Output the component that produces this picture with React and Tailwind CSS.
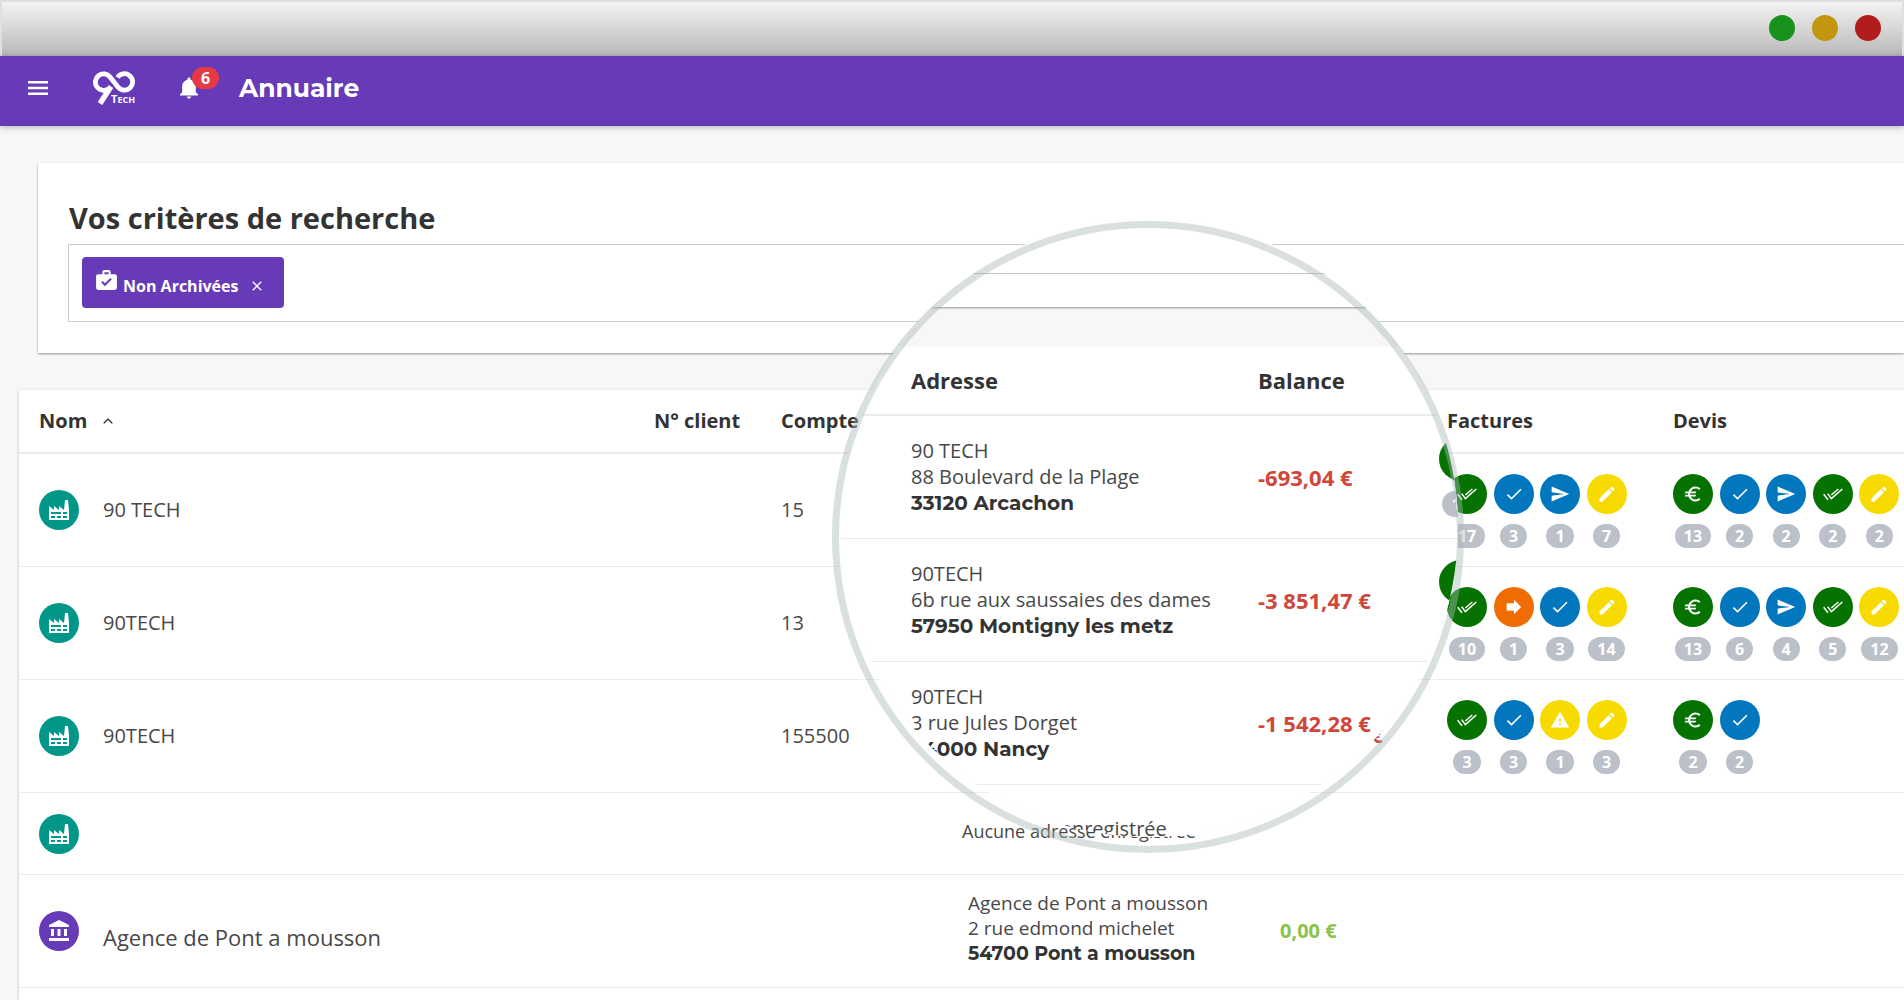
import { IoMdClose, IoIosArrowUp, IoMdNotifications } from "react-icons/io";
import { MdAccountBalance, MdCheck, MdEdit, MdEuro, MdSend, MdWarning } from "react-icons/md";
import { clsx } from "clsx";

const MenuIcon = () => (
  <svg viewBox="0 0 20 14" fill="currentColor" className="h-3.5 w-5">
    <path d="M0 0h20v2.6H0zM0 5.7h20v2.6H0zM0 11.4h20V14H0z" />
  </svg>
);

const FactoryIcon = ({ className }) => (
  <svg viewBox="0 0 24 24" fill="currentColor" className={className}>
    <path d="M4,18V20H8V18H4M4,14V16H14V14H4M10,18V20H14V18H10M16,14V16H20V14H16M16,18V20H20V18H16M2,22V8L7,12V8L12,12V8L17,12L18,2H21L22,12V22H2Z" />
  </svg>
);

const ArrowBoldIcon = ({ className }) => (
  <svg viewBox="1 1 22 22" fill="currentColor" className={className}>
    <path d="M4,16V8H12V4.16L19.84,12L12,19.84V16H4Z" />
  </svg>
);

const DoubleCheckIcon = ({ className }) => (
  <svg viewBox="0 0 60 60" fill="none" stroke="currentColor" strokeWidth="4.5" className={className}>
    <path d="M2 31 L15 47 M14 29 L25 44 L58 15 M25 33 L46 15" />
  </svg>
);

const BriefcaseCheckIcon = ({ className }) => (
  <svg viewBox="0 0 24 24" fill="currentColor" className={className}>
    <path d="M10,2H14A2,2 0 0,1 16,4V6H20A2,2 0 0,1 22,8V19A2,2 0 0,1 20,21H4C2.89,21 2,20.1 2,19V8C2,6.89 2.89,6 4,6H8V4C8,2.89 8.89,2 10,2M14,6V4H10V6H14M10.5,17.5L17.09,10.91L15.68,9.5L10.5,14.67L8.41,12.59L7,14L10.5,17.5Z" />
  </svg>
);

const Logo = () => (
  <svg viewBox="0 0 42 34" className="h-[34px] w-[42px]" aria-label="90 Tech">
    <g fill="none" stroke="#fff" strokeWidth="4.8">
      <path d="M15 18 A8.2 8.2 0 1 1 17 6 L25 16 A8.2 8.2 0 1 0 24.5 6.5" strokeLinejoin="round" />
      <path d="M18 15.5 L7 32.5" strokeWidth="5.4" />
    </g>
    <text x="18" y="32" fill="#fff" fontFamily="Open Sans, sans-serif" fontWeight="700" fontSize="11">
      T<tspan fontSize="9">ECH</tspan>
    </text>
  </svg>
);

const STATUTS = {
  paye: { icon: DoubleCheckIcon, color: "bg-[#067300]" },
  euro: { icon: MdEuro, color: "bg-[#067300]" },
  valide: { icon: MdCheck, color: "bg-[#0277bd]" },
  envoye: { icon: MdSend, color: "bg-[#0277bd]" },
  transfert: { icon: ArrowBoldIcon, color: "bg-[#ef6c00]" },
  alerte: { icon: MdWarning, color: "bg-[#f7da00]" },
  brouillon: { icon: MdEdit, color: "bg-[#f7da00]" },
};

const clients = [
  {
    id: 1,
    nom: "90 TECH",
    compte: "15",
    adresse: ["90 TECH", "88 Boulevard de la Plage", "33120 Arcachon"],
    balance: "-693,04 €",
    factures: [["paye", 17], ["valide", 3], ["envoye", 1], ["brouillon", 7]],
    devis: [["euro", 13], ["valide", 2], ["envoye", 2], ["paye", 2], ["brouillon", 2]],
  },
  {
    id: 2,
    nom: "90TECH",
    compte: "13",
    adresse: ["90TECH", "6b rue aux saussaies des dames", "57950 Montigny les metz"],
    balance: "-3 851,47 €",
    factures: [["paye", 10], ["transfert", 1], ["valide", 3], ["brouillon", 14]],
    devis: [["euro", 13], ["valide", 6], ["envoye", 4], ["paye", 5], ["brouillon", 12]],
  },
  {
    id: 3,
    nom: "90TECH",
    compte: "155500",
    adresse: ["90TECH", "3 rue Jules Dorget", "54000 Nancy"],
    balance: "-1 542,28 €",
    factures: [["paye", 3], ["valide", 3], ["alerte", 1], ["brouillon", 3]],
    devis: [["euro", 2], ["valide", 2]],
  },
  { id: 4, nom: "", factures: [], devis: [] },
  {
    id: 5,
    nom: "Agence de Pont a mousson",
    banque: true,
    adresse: ["Agence de Pont a mousson", "2 rue edmond michelet", "54700 Pont a mousson"],
    balance: "0,00 €",
    factures: [],
    devis: [],
  },
];

const Adresse = ({ lignes, zoom }) => {
  if (!lignes) {
    return <span className={zoom ? "-ml-1 text-[20px]" : "-ml-1.5 text-[18px]"}>Aucune adresse enregistrée</span>;
  }
  const [nom, rue, ville] = lignes;
  return (
    <address className={clsx("not-italic", zoom ? "text-[20px] leading-[26px]" : "text-[19px] leading-[25px]")}>
      <div>{nom}</div>
      <div>{rue}</div>
      <div className="font-[Montserrat,Inter,sans-serif] font-bold text-[#333]">{ville}</div>
    </address>
  );
};

const Balance = ({ montant, zoom }) => {
  if (!montant) return null;
  return (
    <span
      className={clsx(
        "whitespace-nowrap font-bold",
        zoom ? "text-[22px]" : "text-[20px]",
        montant.startsWith("-") ? "text-[#d0463b]" : "text-[#8bc34a]"
      )}
    >
      {montant}
    </span>
  );
};

const Statut = ({ type, nombre }) => {
  const { icon: Icon, color } = STATUTS[type];
  return (
    <div className="flex w-10 flex-col items-center gap-2.5">
      <button className={clsx("flex size-10 items-center justify-center rounded-full text-white", color)} aria-label={type}>
        <Icon className="size-5" />
      </button>
      <span className="rounded-full bg-[#bcc1c9] px-[9px] text-[16px] font-bold leading-6 text-white">{nombre}</span>
    </div>
  );
};

const TableauClients = () => (
  <table className="w-full table-fixed border-separate border-spacing-0 text-left text-[20px]">
    <colgroup>
      <col />
      <col className="w-[127px]" />
      <col className="w-[187px]" />
      <col className="w-[312px]" />
      <col className="w-[167px]" />
      <col className="w-[226px]" />
      <col className="w-[247px]" />
    </colgroup>
    <thead>
      <tr className="h-16 text-[#333] *:border-b-2 *:border-[#ececec] *:font-bold">
        <th className="pl-5">
          <button className="flex items-center gap-3.5">
            Nom
            <IoIosArrowUp className="size-3.5" />
          </button>
        </th>
        <th className="pl-4">N° client</th>
        <th className="pl-4">Compte</th>
        <th className="pl-4">Adresse</th>
        <th className="pl-4">Balance</th>
        <th className="pl-4">Factures</th>
        <th className="pl-4">Devis</th>
      </tr>
    </thead>
    <tbody>
      {clients.map((client) => (
        <tr
          key={client.id}
          className={clsx("*:border-b *:border-[#ececec]", client.adresse ? "h-[113px]" : "h-[82px]")}
        >
          <td className="pl-5">
            <div className="flex items-center gap-6">
              <span
                className={clsx(
                  "flex size-10 items-center justify-center rounded-full text-white",
                  client.banque ? "bg-[#673ab7]" : "bg-[#009688]"
                )}
              >
                {client.banque ? <MdAccountBalance className="size-6" /> : <FactoryIcon className="size-6" />}
              </span>
              <a href="#client" className={clsx(client.banque && "pt-3 text-[22px]")}>
                {client.nom}
              </a>
            </div>
          </td>
          <td className="pl-4" />
          <td className="pl-4">{client.compte}</td>
          <td className="pb-1.5 pl-4">
            <Adresse lignes={client.adresse} />
          </td>
          <td className="pl-4">
            <Balance montant={client.balance} />
          </td>
          <td className="pl-4 pt-0.5">
            <div className="grid w-[186px] grid-cols-4">
              {client.factures.map(([type, nombre]) => (
                <Statut key={type} type={type} nombre={nombre} />
              ))}
            </div>
          </td>
          <td className="pl-4 pt-0.5">
            <div className="grid w-[233px] grid-cols-5">
              {client.devis.map(([type, nombre]) => (
                <Statut key={type} type={type} nombre={nombre} />
              ))}
            </div>
          </td>
        </tr>
      ))}
    </tbody>
  </table>
);

// Magnifier laid over the address and balance columns
const Loupe = () => (
  <div className="absolute right-[440px] top-[221px] size-[632px]" aria-hidden="true">
    <div className="absolute -top-0.5 left-2 size-[618px] overflow-hidden rounded-full bg-[#f7f7f7]">
      <div className="h-[55px] border-b border-[#ccc] bg-white" />
      <div className="mb-10 h-[33px] bg-white shadow-[0_1px_2px_rgba(0,0,0,0.4)]" />
      <table className="w-full table-fixed border-separate border-spacing-0 bg-white text-left">
        <colgroup>
          <col className="w-[418px]" />
          <col className="w-[181px]" />
          <col />
        </colgroup>
        <thead>
          <tr className="h-[69px] text-[22px] text-[#333] *:border-b-2 *:border-[#ececec] *:font-bold">
            <th className="pl-[71px]">Adresse</th>
            <th>Balance</th>
            <th />
          </tr>
        </thead>
        <tbody>
          {clients.slice(0, 4).map((client) => (
            <tr key={client.id} className={clsx("*:border-b *:border-[#ececec]", client.adresse ? "h-[123px]" : "h-[89px]")}>
              <td className="pl-[71px]">
                <Adresse lignes={client.adresse} zoom />
              </td>
              <td>
                <Balance montant={client.balance} zoom />
              </td>
              <td>
                {client.factures.slice(0, 1).map(([type, nombre]) => (
                  <div key={type} className="flex w-11 flex-col items-center gap-2.5">
                    <span className="size-11 rounded-full bg-[#067300]" />
                    <span className="rounded-full bg-[#bcc1c9] px-2.5 text-[16px] font-bold leading-[26px] text-white">
                      {nombre}
                    </span>
                  </div>
                ))}
              </td>
            </tr>
          ))}
        </tbody>
      </table>
    </div>
    <div className="absolute inset-0 rounded-full border-[7px] border-[rgba(170,184,182,0.43)]" />
  </div>
);

export default function App() {
  return (
    <div className="relative flex min-h-screen flex-col overflow-hidden bg-[#f7f7f7] font-['Open_Sans',sans-serif] text-[#484848]">
      <div className="flex h-14 items-center justify-end gap-[17px] border-x-2 border-t-2 border-[#e0e0e0] bg-linear-to-b from-[#f3f3f3] to-[#b9b9b9] pb-0.5 pr-[21px]">
        <button className="size-[26px] rounded-full bg-[#19911d]" aria-label="Réduire" />
        <button className="size-[26px] rounded-full bg-[#c3960f]" aria-label="Agrandir" />
        <button className="size-[26px] rounded-full bg-[#b11c1c]" aria-label="Fermer" />
      </div>

      <header className="flex h-[70px] items-center bg-[#673ab7] pb-1.5 pl-7 text-white shadow-[0_1px_6px_rgba(0,0,0,0.3)]">
        <button aria-label="Menu">
          <MenuIcon />
        </button>
        <a href="#accueil" className="ml-[45px]">
          <Logo />
        </a>
        <button className="relative ml-[41px]" aria-label="Notifications">
          <IoMdNotifications className="size-[26px]" />
          <span className="absolute -top-2 left-4 rounded-full bg-[#e53946] px-[9px] text-[16px] font-bold leading-[22px]">
            6
          </span>
        </button>
        <h1 className="ml-[37px] pt-0.5 font-[Montserrat,Inter,sans-serif] text-[25px] font-bold">Annuaire</h1>
      </header>

      <section className="ml-[38px] mt-[37px] h-[190px] bg-white pl-[30px] pt-9 shadow-[0_1px_2px_rgba(0,0,0,0.4)]">
        <h2 className="pl-px text-[29px] font-bold leading-[38px] text-[#333]">Vos critères de recherche</h2>
        <div className="mt-[7px] flex h-[78px] border border-r-0 border-[#ccc] pl-[13px] pt-3">
          <div className="flex h-[51px] w-[202px] items-center rounded bg-[#673ab7] pl-3 text-white">
            <BriefcaseCheckIcon className="mb-1 size-[25px]" />
            <span className="ml-1 pt-1.5 text-[16px] font-bold">Non Archivées</span>
            <button className="ml-[11px] pt-1.5" aria-label="Retirer le critère">
              <IoMdClose className="size-4" />
            </button>
          </div>
        </div>
      </section>

      <section className="ml-[19px] mt-[37px] grow bg-white shadow-[0_1px_3px_rgba(0,0,0,0.25)]">
        <TableauClients />
      </section>

      <Loupe />
    </div>
  );
}
